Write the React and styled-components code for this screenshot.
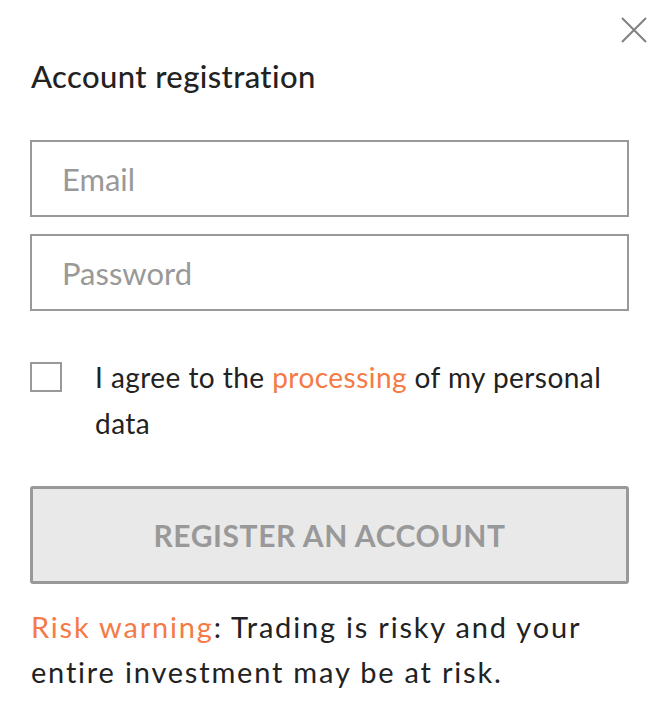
import React from 'react';
import styled, { createGlobalStyle } from 'styled-components';

const GlobalStyle = createGlobalStyle`
    html, body {
        margin: 0;
        padding: 0;
        background: #ffffff;
    }
    body {
        font-family: Lato, 'Noto Sans', sans-serif;
        color: #222222;
    }
`;

const App = () => {
    return (
        <>
            <GlobalStyle />
            <StyledModal>
                <StyledTopBar>
                    <StyledClose aria-label="Close">
                        <svg width="26" height="26" viewBox="0 0 26 26">
                            <path d="M1 1 L25 25 M25 1 L1 25" stroke="#808080" strokeWidth="2" fill="none" />
                        </svg>
                    </StyledClose>
                </StyledTopBar>
                <StyledTitle>Account registration</StyledTitle>
                <StyledFields>
                    <StyledInput type="email" placeholder="Email" />
                    <StyledInput type="password" placeholder="Password" />
                </StyledFields>
                <StyledAgreeRow>
                    <StyledCheckbox type="checkbox" />
                    <StyledAgreeText>
                        I agree to the <StyledAccent>processing</StyledAccent> of my personal data
                    </StyledAgreeText>
                </StyledAgreeRow>
                <StyledSubmit type="button">REGISTER AN ACCOUNT</StyledSubmit>
                <StyledRisk>
                    <StyledAccent>Risk warning</StyledAccent>: Trading is risky and your entire investment may be at risk.
                </StyledRisk>
            </StyledModal>
        </>
    )
}

export default App;

const StyledModal = styled.div`
    width: 666px;
    box-sizing: border-box;
    padding: 17px 37px 0 30px;
    display: flex;
    flex-direction: column;
`;
const StyledTopBar = styled.div`
    display: flex;
    justify-content: flex-end;
    margin-right: -18px;
    height: 26px;
`;
const StyledClose = styled.button`
    width: 26px;
    height: 26px;
    padding: 0;
    border: none;
    background: none;
    cursor: pointer;
    display: flex;
`;
const StyledTitle = styled.h1`
    font-size: 31px;
    font-weight: 500;
    line-height: 40px;
    letter-spacing: 0.4px;
    margin: 13px 0 0 1px;
    color: #222222;
`;
const StyledFields = styled.div`
    display: flex;
    flex-direction: column;
    gap: 17px;
    margin-top: 44px;
`;
const StyledInput = styled.input`
    box-sizing: border-box;
    width: 100%;
    height: 77px;
    border: 2px solid #999999;
    border-radius: 0;
    padding: 0 30px;
    font-family: Lato, 'Noto Sans', sans-serif;
    font-size: 31px;
    color: #222222;
    outline: none;
    &::placeholder {
        color: #999999;
    }
`;
const StyledAgreeRow = styled.label`
    display: flex;
    align-items: flex-start;
    gap: 33px;
    margin-top: 51px;
`;
const StyledCheckbox = styled.input`
    appearance: none;
    flex: none;
    box-sizing: border-box;
    width: 32px;
    height: 30px;
    margin: 0;
    border: 2px solid #999999;
    background: #ffffff;
`;
const StyledAgreeText = styled.p`
    margin: -8px 0 0 0;
    font-size: 28px;
    line-height: 46px;
    letter-spacing: 0.45px;
    color: #222222;
`;
const StyledAccent = styled.span`
    color: #f47b45;
`;
const StyledSubmit = styled.button`
    box-sizing: border-box;
    width: 100%;
    height: 98px;
    margin-top: 40px;
    border: 3px solid #999999;
    border-radius: 3px;
    background: #e9e9e9;
    color: #999999;
    font-family: Lato, 'Noto Sans', sans-serif;
    font-size: 30px;
    font-weight: 700;
    letter-spacing: 0.6px;
`;
const StyledRisk = styled.p`
    margin: 20px 0 0 1px;
    font-size: 29px;
    line-height: 45px;
    letter-spacing: 1.8px;
    color: #222222;
`;
